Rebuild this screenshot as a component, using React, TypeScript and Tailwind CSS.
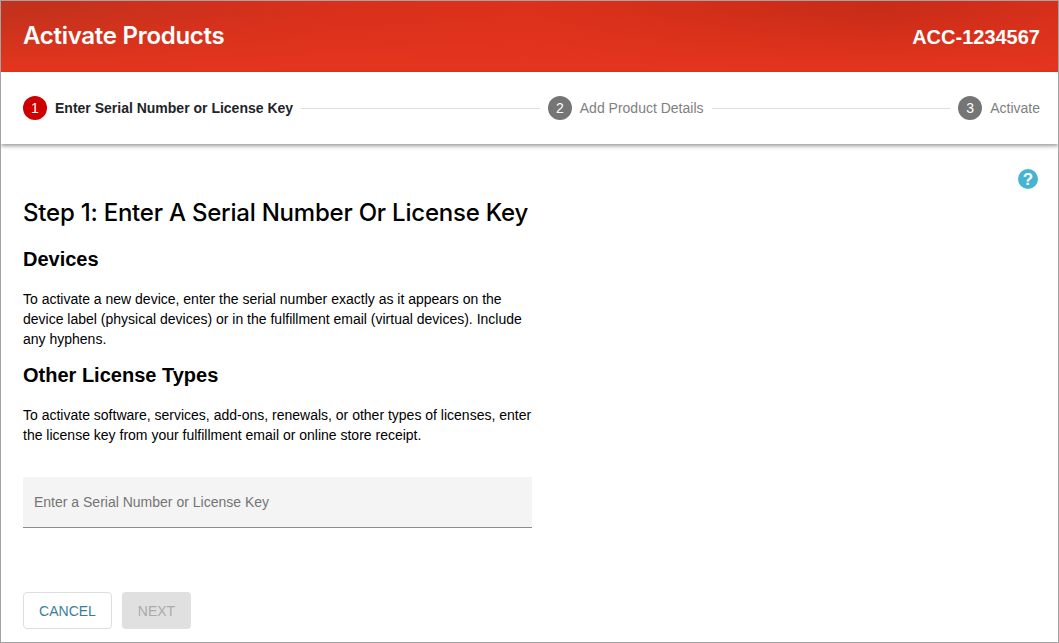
const sans = "font-['Liberation_Sans',Arial,sans-serif]";

function Step({ n, label, active }: { n: number; label: string; active?: boolean }) {
  return (
    <div className="flex shrink-0 items-center">
      <span
        className={`flex h-6 w-6 items-center justify-center rounded-full text-sm text-white ${
          active ? "bg-[#cf0000]" : "bg-[#757575]"
        }`}
      >
        {n}
      </span>
      <span className={`ml-2 text-sm ${active ? "font-bold text-[#212529]" : "text-[#808080]"}`}>{label}</span>
    </div>
  );
}

export default function App() {
  return (
    <div className={`${sans} flex h-[643px] w-[1059px] flex-col overflow-hidden border border-[#a3a3a3] bg-white text-black`}>
      {/* header */}
      <header className="flex h-[71px] shrink-0 items-center justify-between bg-[linear-gradient(to_bottom,transparent_15%,#e5351e_100%),linear-gradient(to_right,#c2321c_0%,#d8301c_30%,#dc311c_50%,#c82c17_83%,#d6301c_100%)] pl-[22px] pr-[18px] text-white">
        <h1 className="pb-[2px] font-['Inter',sans-serif] text-[24px] font-semibold leading-[28px] tracking-[-0.28px]">
          Activate Products
        </h1>
        <span className="text-xl font-bold">ACC-1234567</span>
      </header>

      {/* stepper */}
      <div className="z-10 flex h-[72px] shrink-0 items-center pl-[22px] pr-[18px] shadow-[0_2px_4px_rgba(0,0,0,0.4)]">
        <Step n={1} label="Enter Serial Number or License Key" active />
        <div className="mx-2 h-px flex-1 bg-[#dedede]" />
        <Step n={2} label="Add Product Details" />
        <div className="mx-2 h-px flex-1 bg-[#dedede]" />
        <Step n={3} label="Activate" />
      </div>

      {/* body */}
      <main className="relative flex flex-1 flex-col pl-[22px] pt-[55px]">
        <svg className="absolute right-[20px] top-[25px] h-5 w-5" viewBox="0 0 20 20" aria-hidden>
          <circle cx="10" cy="10" r="10" fill="#45b3d1" />
          <text x="10" y="16" textAnchor="middle" fontSize="17" fontWeight="700" fontFamily="Liberation Sans" fill="#fff">
            ?
          </text>
        </svg>

        <h2 className="font-['Inter',sans-serif] text-[24px] font-medium leading-[28px] tracking-[-0.22px]">
          Step 1: Enter A Serial Number Or License Key
        </h2>
        <h3 className="mt-[20px] text-xl font-bold leading-6">Devices</h3>
        <p className="mt-[18px] w-[509px] text-sm leading-5">
          To activate a new device, enter the serial number exactly as it appears on the device label (physical
          devices) or in the fulfillment email (virtual devices). Include any hyphens.
        </p>
        <h3 className="mt-[14px] text-xl font-bold leading-6">Other License Types</h3>
        <p className="mt-[18px] w-[509px] text-sm leading-5">
          To activate software, services, add-ons, renewals, or other types of licenses, enter the license key from
          your fulfillment email or online store receipt.
        </p>

        <div className="mt-[32px] flex h-[51px] w-[509px] items-center border-b border-[#8c8c8c] bg-[#f4f4f4] px-[11px] text-sm text-[#757575]">
          Enter a Serial Number or License Key
        </div>

        <div className="mt-[64px] flex gap-[10px]">
          <button className="h-[37px] w-[89px] rounded border border-[#dedede] bg-white text-sm text-[#3a7f99]">
            CANCEL
          </button>
          <button className="h-[37px] w-[69px] rounded bg-[#e0e0e0] text-sm text-[#ababab]">NEXT</button>
        </div>
      </main>
    </div>
  );
}
